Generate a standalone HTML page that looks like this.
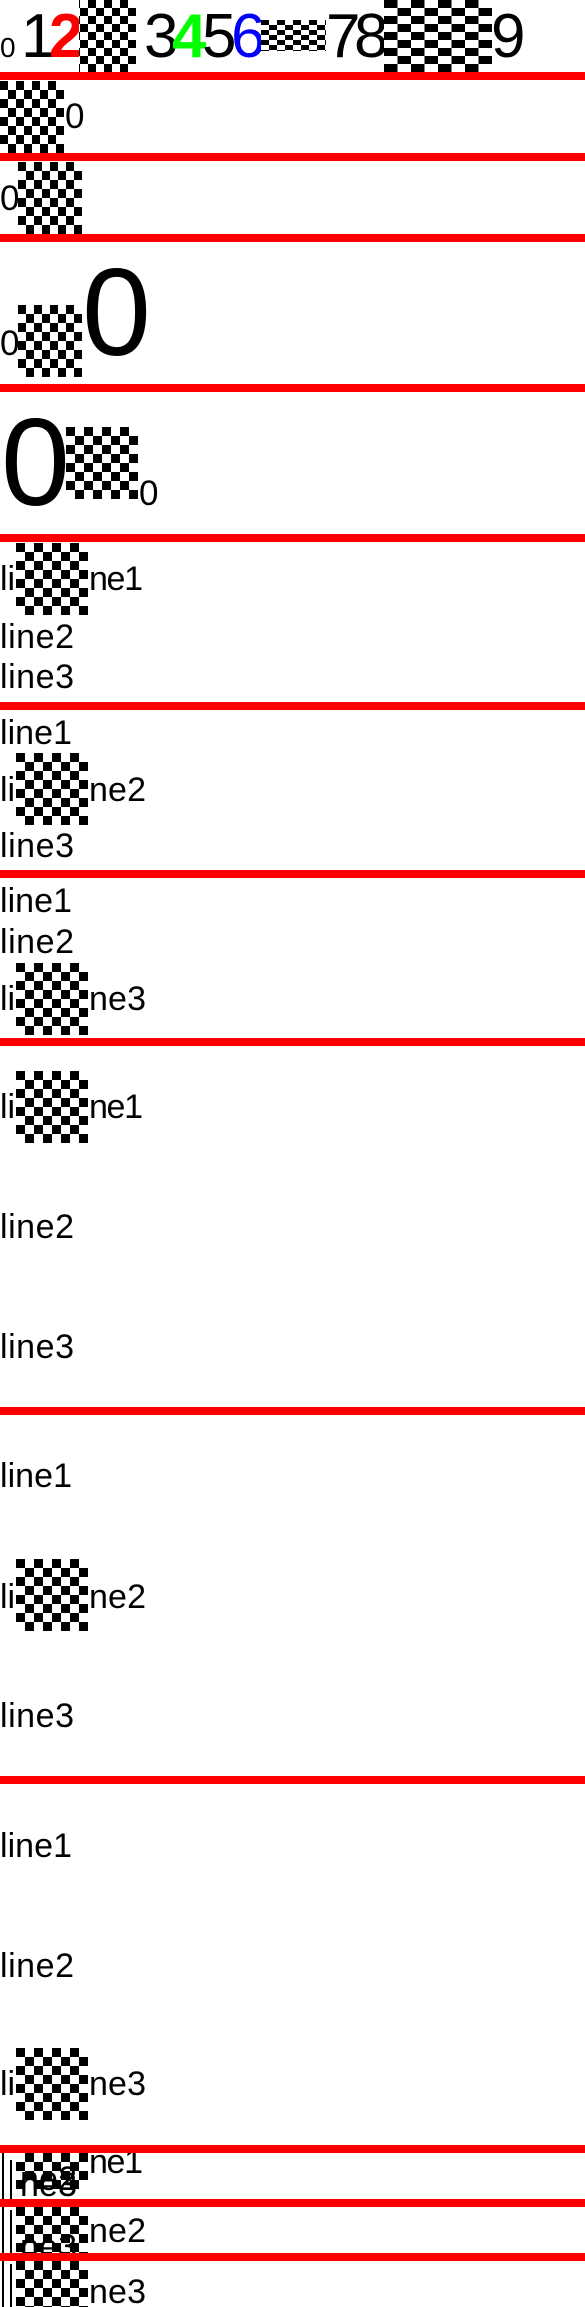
<!DOCTYPE html>
<html><head><meta charset="utf-8"><style>
html,body{margin:0;padding:0;background:#fff;width:585px;height:2307px;overflow:hidden;position:relative}
svg{display:block;position:absolute;left:0;top:0}
text{font-family:"Liberation Sans",sans-serif;fill:#000}
.c{position:absolute;background:repeating-conic-gradient(#fff 0 25%,#000 0 50%)}
</style></head><body>
<svg width="585" height="2307" xmlns="http://www.w3.org/2000/svg">
<defs>
<clipPath id="cA"><rect x="0" y="2153" width="585" height="46"/></clipPath>
<clipPath id="cB"><rect x="0" y="2207" width="585" height="46"/></clipPath>
<clipPath id="cC"><rect x="0" y="2261" width="585" height="46"/></clipPath>
</defs>
<text x="0" y="57" font-size="28" textLength="14">0</text>
<text x="21" y="57" font-size="62" textLength="25">1</text>
<text x="49" y="57" font-size="62" textLength="29" style="fill:#f00;font-weight:bold">2</text>
<text x="144" y="57" font-size="62" textLength="27">3</text>
<text x="172" y="57" font-size="62" textLength="29" style="fill:#0f0;font-weight:bold">4</text>
<text x="202" y="57" font-size="62" textLength="27">5</text>
<text x="231" y="57" font-size="62" textLength="29" style="fill:#00f">6</text>
<text x="326" y="57" font-size="62" textLength="27">7</text>
<text x="354" y="57" font-size="62" textLength="29">8</text>
<text x="491" y="57" font-size="62" textLength="29">9</text>

<text x="65" y="128" font-size="35" textLength="16">0</text>
<text x="0" y="210" font-size="35" textLength="16">0</text>
<text x="0" y="355" font-size="35" textLength="16">0</text>
<text x="82" y="355" font-size="124" textLength="56">0</text>
<text x="1" y="505" font-size="124" textLength="62">0</text>
<text x="139" y="505" font-size="35" textLength="16">0</text>

<g font-size="34">
<text x="0" y="590" textLength="15">li</text><text x="89" y="590" textLength="54">ne1</text>
<text x="0" y="648" textLength="74">line2</text>
<text x="0" y="688" textLength="74">line3</text>

<text x="0" y="744" textLength="72">line1</text>
<text x="0" y="801" textLength="15">li</text><text x="89" y="801" textLength="57">ne2</text>
<text x="0" y="857" textLength="74">line3</text>

<text x="0" y="912" textLength="72">line1</text>
<text x="0" y="953" textLength="74">line2</text>
<text x="0" y="1010" textLength="15">li</text><text x="89" y="1010" textLength="57">ne3</text>

<text x="0" y="1118" textLength="15">li</text><text x="89" y="1118" textLength="54">ne1</text>
<text x="0" y="1238" textLength="74">line2</text>
<text x="0" y="1358" textLength="74">line3</text>

<text x="0" y="1487" textLength="72">line1</text>
<text x="0" y="1608" textLength="15">li</text><text x="89" y="1608" textLength="57">ne2</text>
<text x="0" y="1727" textLength="74">line3</text>

<text x="0" y="1857" textLength="72">line1</text>
<text x="0" y="1977" textLength="74">line2</text>
<text x="0" y="2095" textLength="15">li</text><text x="89" y="2095" textLength="57">ne3</text>
</g>
</svg>

<div class="c" style="left:79px;top:0;width:57px;height:72px;background-size:16px 16px;background-position:-7px 0"></div>
<div class="c" style="left:261px;top:20px;width:65px;height:31px;background-size:16px 10px"></div>
<div class="c" style="left:384px;top:0;width:108px;height:72px;background-size:27px 16px"></div>
<div class="c" style="left:0;top:81px;width:64px;height:72px;background-size:16px 18px"></div>
<div class="c" style="left:18px;top:162px;width:64px;height:72px;background-size:16px 18px"></div>
<div class="c" style="left:18px;top:305px;width:64px;height:72px;background-size:16px 18px"></div>
<div class="c" style="left:66px;top:427px;width:72px;height:72px;background-size:18px 18px"></div>
<div class="c" style="left:16px;top:543px;width:72px;height:72px;background-size:18px 18px"></div>
<div class="c" style="left:16px;top:753px;width:72px;height:72px;background-size:18px 18px"></div>
<div class="c" style="left:16px;top:963px;width:72px;height:72px;background-size:18px 18px"></div>
<div class="c" style="left:16px;top:1071px;width:72px;height:72px;background-size:18px 18px"></div>
<div class="c" style="left:16px;top:1559px;width:72px;height:72px;background-size:18px 18px"></div>
<div class="c" style="left:16px;top:2048px;width:72px;height:72px;background-size:18px 18px"></div>
<div class="c" style="left:16px;top:2153px;width:72px;height:36px;background-size:18px 18px;background-position:0 -9px"></div>
<div class="c" style="left:16px;top:2207px;width:72px;height:46px;background-size:18px 18px"></div>
<div class="c" style="left:16px;top:2261px;width:72px;height:46px;background-size:18px 18px"></div>

<svg width="585" height="2307" xmlns="http://www.w3.org/2000/svg">
<defs>
<clipPath id="dA"><rect x="0" y="2153" width="585" height="46"/></clipPath>
<clipPath id="dB"><rect x="0" y="2207" width="585" height="46"/></clipPath>
<clipPath id="dC"><rect x="0" y="2261" width="585" height="46"/></clipPath>
</defs>
<g font-size="34">
<g clip-path="url(#dA)">
<rect x="2" y="2153" width="2" height="46" fill="#000"/><rect x="10" y="2160" width="2" height="40" fill="#000"/>
<text x="89" y="2173" textLength="54">ne1</text>
<text x="20" y="2190" textLength="57">ne2</text>
<text x="20" y="2196" textLength="57">ne3</text>
</g>
<g clip-path="url(#dB)">
<rect x="2" y="2207" width="2" height="46" fill="#000"/><rect x="10" y="2210" width="2" height="43" fill="#000"/>
<text x="89" y="2242" textLength="57">ne2</text>
<text x="20" y="2258" textLength="57">ne3</text>
</g>
<g clip-path="url(#dC)">
<rect x="2" y="2261" width="2" height="46" fill="#000"/><rect x="10" y="2264" width="2" height="43" fill="#000"/>
<text x="89" y="2303" textLength="57">ne3</text>
</g>
</g>
<g fill="#f00">
<rect x="0" y="72" width="585" height="8"/>
<rect x="0" y="153" width="585" height="8"/>
<rect x="0" y="234" width="585" height="8"/>
<rect x="0" y="384" width="585" height="8"/>
<rect x="0" y="534" width="585" height="8"/>
<rect x="0" y="702" width="585" height="8"/>
<rect x="0" y="870" width="585" height="8"/>
<rect x="0" y="1038" width="585" height="8"/>
<rect x="0" y="1407" width="585" height="8"/>
<rect x="0" y="1776" width="585" height="8"/>
<rect x="0" y="2145" width="585" height="8"/>
<rect x="0" y="2199" width="585" height="8"/>
<rect x="0" y="2253" width="585" height="8"/>
</g>
</svg>
</body></html>
